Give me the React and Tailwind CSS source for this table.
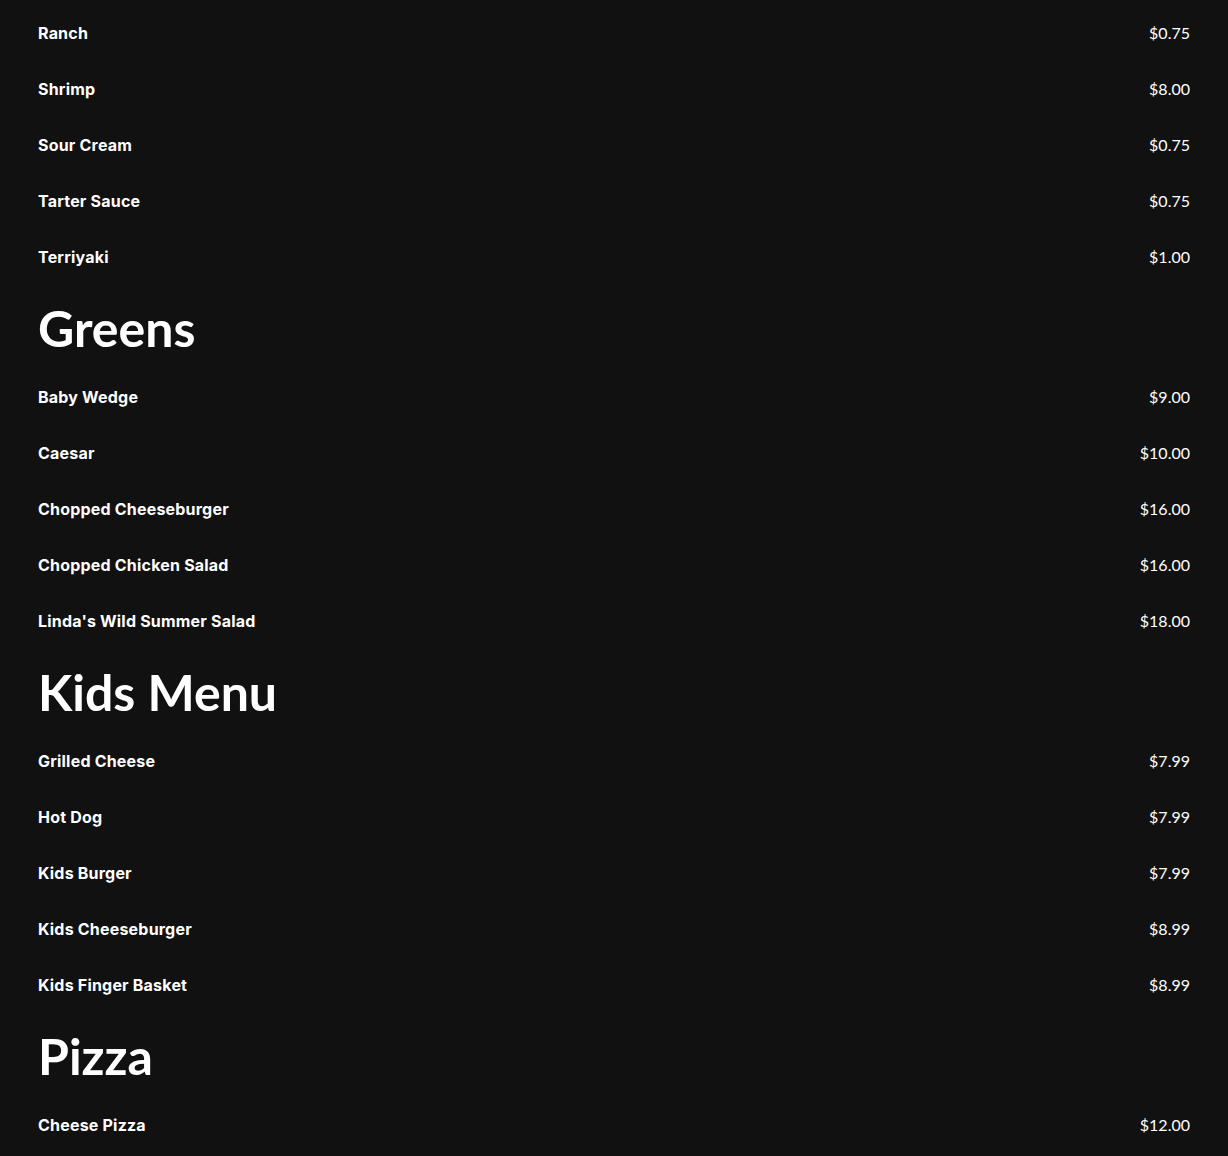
const sections = [
	{
		title: null,
		items: [
			["Ranch", "$0.75"],
			["Shrimp", "$8.00"],
			["Sour Cream", "$0.75"],
			["Tarter Sauce", "$0.75"],
			["Terriyaki", "$1.00"],
		],
	},
	{
		title: "Greens",
		items: [
			["Baby Wedge", "$9.00"],
			["Caesar", "$10.00"],
			["Chopped Cheeseburger", "$16.00"],
			["Chopped Chicken Salad", "$16.00"],
			["Linda's Wild Summer Salad", "$18.00"],
		],
	},
	{
		title: "Kids Menu",
		items: [
			["Grilled Cheese", "$7.99"],
			["Hot Dog", "$7.99"],
			["Kids Burger", "$7.99"],
			["Kids Cheeseburger", "$8.99"],
			["Kids Finger Basket", "$8.99"],
		],
	},
	{
		title: "Pizza",
		items: [["Cheese Pizza", "$12.00"]],
	},
];

function MenuRow({ name, price }) {
	return (
		<li className="flex justify-between items-center h-[56px]">
			<span className="text-[16px] font-bold tracking-[0.2px] font-['Inter',sans-serif]">
				{name}
			</span>
			<span className="text-[16px] font-normal font-['Lato',sans-serif]">
				{price}
			</span>
		</li>
	);
}

function App() {
	return (
		<div className="min-h-[1156px] bg-[#111111] text-white px-[38px] pt-[5px] overflow-hidden">
			{sections.map((section, i) => (
				<section key={i}>
					{section.title && (
						<h2 className="h-[84px] flex items-center pt-[2px] text-[50px] font-bold leading-none font-['Lato',sans-serif]">
							{section.title}
						</h2>
					)}
					<ul>
						{section.items.map(([name, price]) => (
							<MenuRow key={name} name={name} price={price} />
						))}
					</ul>
				</section>
			))}
		</div>
	);
}

export default App;
